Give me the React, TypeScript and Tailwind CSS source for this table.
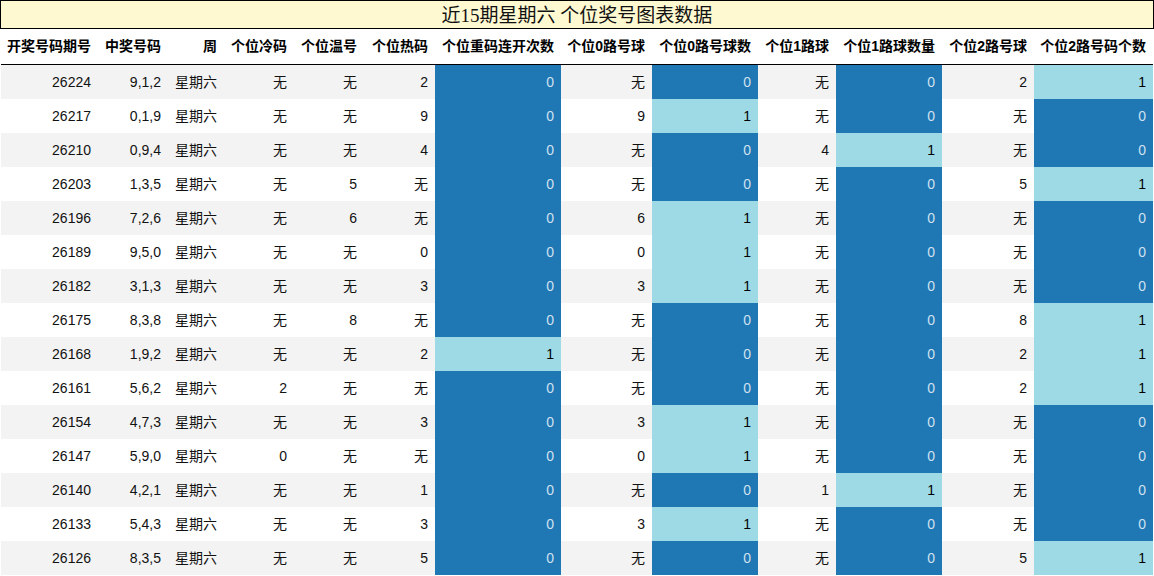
import React from "react";

type Cell = { v: string; c?: "d" | "l" };

const HEADERS = [
  "开奖号码期号",
  "中奖号码",
  "周",
  "个位冷码",
  "个位温号",
  "个位热码",
  "个位重码连开次数",
  "个位0路号球",
  "个位0路号球数",
  "个位1路球",
  "个位1路球数量",
  "个位2路号球",
  "个位2路号码个数",
];

const WIDTHS = [97, 70, 56, 70, 70, 71, 126, 91, 106, 78, 106, 92, 119];

// 期号, 号码, 冷, 温, 热, 重码, 0路, 0路数, 1路, 1路数, 2路, 2路数
const RAW: string[][] = [
  ["26224", "9,1,2", "无", "无", "2", "0", "无", "0", "无", "0", "2", "1"],
  ["26217", "0,1,9", "无", "无", "9", "0", "9", "1", "无", "0", "无", "0"],
  ["26210", "0,9,4", "无", "无", "4", "0", "无", "0", "4", "1", "无", "0"],
  ["26203", "1,3,5", "无", "5", "无", "0", "无", "0", "无", "0", "5", "1"],
  ["26196", "7,2,6", "无", "6", "无", "0", "6", "1", "无", "0", "无", "0"],
  ["26189", "9,5,0", "无", "无", "0", "0", "0", "1", "无", "0", "无", "0"],
  ["26182", "3,1,3", "无", "无", "3", "0", "3", "1", "无", "0", "无", "0"],
  ["26175", "8,3,8", "无", "8", "无", "0", "无", "0", "无", "0", "8", "1"],
  ["26168", "1,9,2", "无", "无", "2", "1", "无", "0", "无", "0", "2", "1"],
  ["26161", "5,6,2", "2", "无", "无", "0", "无", "0", "无", "0", "2", "1"],
  ["26154", "4,7,3", "无", "无", "3", "0", "3", "1", "无", "0", "无", "0"],
  ["26147", "5,9,0", "0", "无", "无", "0", "0", "1", "无", "0", "无", "0"],
  ["26140", "4,2,1", "无", "无", "1", "0", "无", "0", "1", "1", "无", "0"],
  ["26133", "5,4,3", "无", "无", "3", "0", "3", "1", "无", "0", "无", "0"],
  ["26126", "8,3,5", "无", "无", "5", "0", "无", "0", "无", "0", "5", "1"],
];

// columns holding a count get the blue heat colouring
const HEAT = new Set([5, 7, 9, 11]);

function toCells(r: string[]): Cell[] {
  const cells: Cell[] = r.map((v, i) => ({
    v,
    c: HEAT.has(i) ? (v === "0" ? "d" : "l") : undefined,
  }));
  cells.splice(2, 0, { v: "星期六" });
  return cells;
}

const FONT = {
  fontFamily: '"Liberation Sans", "Noto Sans CJK SC", sans-serif',
};

export default function App() {
  return (
    <div className="w-[1154px] h-[576px] overflow-hidden bg-white" style={FONT}>
      <div
        className="h-[29px] border border-black bg-[#fff9d1] flex items-center justify-center text-[19px] text-[#111] leading-none"
        style={{ fontFamily: '"Liberation Serif", "Noto Sans CJK SC", serif' }}
      >
        <span className="pt-[1px]">近15期星期六 个位奖号图表数据</span>
      </div>
      <div className="px-px">
        <table className="table-fixed border-separate border-spacing-0 w-[1152px]">
          <colgroup>
            {WIDTHS.map((w, i) => (
              <col key={i} style={{ width: w }} />
            ))}
          </colgroup>
          <thead>
            <tr>
              {HEADERS.map((h) => (
                <th
                  key={h}
                  className="h-[36px] border-b border-black text-right p-0 pr-[7px] text-[14px] font-bold text-black whitespace-nowrap"
                >
                  {h}
                </th>
              ))}
            </tr>
          </thead>
          <tbody>
            {RAW.map((r, ri) => (
              <tr
                key={r[0]}
                className={ri % 2 === 0 ? "bg-[#f3f3f3]" : "bg-white"}
              >
                {toCells(r).map((cell, ci) => (
                  <td
                    key={ci}
                    className={
                      cell.c === "d"
                        ? "h-[34px] p-0 pr-[7px] text-right text-[14px] bg-[#1f77b4] text-[#cfe1f0]"
                        : cell.c === "l"
                        ? "h-[34px] p-0 pr-[7px] text-right text-[14px] bg-[#9edae5] text-black"
                        : "h-[34px] p-0 pr-[7px] text-right text-[14px] text-[#111]"
                    }
                  >
                    {cell.v}
                  </td>
                ))}
              </tr>
            ))}
          </tbody>
        </table>
      </div>
    </div>
  );
}
